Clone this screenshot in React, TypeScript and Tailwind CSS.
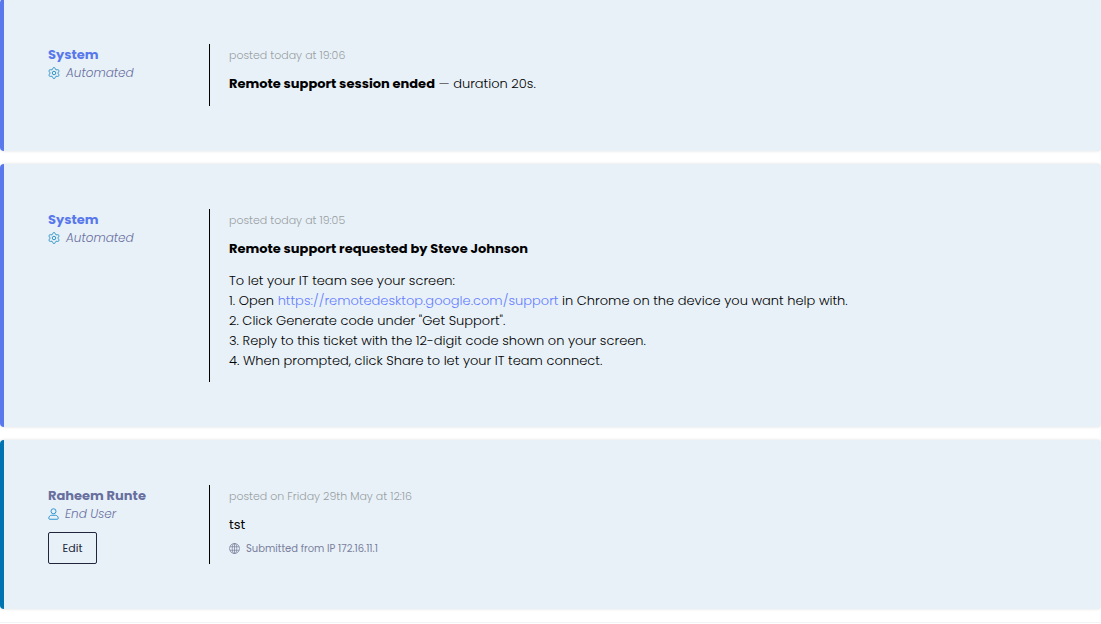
import type { ReactNode } from "react";

function GearIcon() {
  return (
    <svg className="size-3 shrink-0" viewBox="0 0 24 24" fill="none" stroke="#2f94c8" strokeWidth="2" strokeLinejoin="round" aria-hidden="true">
      <path d="M9.6 2.9a2.5 2.5 0 0 1 4.8 0l.4 1.2a2.5 2.5 0 0 0 3 1.6l1.2-.3a2.5 2.5 0 0 1 2.4 4.1l-.8 1a2.5 2.5 0 0 0 0 3.2l.8 1a2.5 2.5 0 0 1-2.4 4.1l-1.2-.3a2.5 2.5 0 0 0-3 1.6l-.4 1.2a2.5 2.5 0 0 1-4.8 0l-.4-1.2a2.5 2.5 0 0 0-3-1.6l-1.2.3a2.5 2.5 0 0 1-2.4-4.1l.8-1a2.5 2.5 0 0 0 0-3.2l-.8-1a2.5 2.5 0 0 1 2.4-4.1l1.2.3a2.5 2.5 0 0 0 3-1.6z" />
      <circle cx="12" cy="12" r="3.5" />
    </svg>
  );
}

function UserIcon() {
  return (
    <svg className="h-3 w-[11px] shrink-0" viewBox="0 0 22 24" fill="none" stroke="#2f94d0" strokeWidth="2" strokeLinejoin="round" aria-hidden="true">
      <circle cx="11" cy="6.5" r="5" />
      <path d="M7.5 14.5h7c3.5 0 6 2.8 6 6 0 1.2-.8 2-2 2h-15c-1.2 0-2-.8-2-2 0-3.2 2.5-6 6-6z" />
    </svg>
  );
}

function GlobeIcon() {
  return (
    <svg className="size-[11px] shrink-0" viewBox="0 0 22 22" fill="none" stroke="#7a809c" strokeWidth="1.5" aria-hidden="true">
      <circle cx="11" cy="11" r="10" />
      <ellipse cx="11" cy="11" rx="4.5" ry="10" />
      <path d="M2 7.5h18M2 14.5h18M11 1v20" />
    </svg>
  );
}

type PostProps = {
  author: string;
  role: string;
  posted: string;
  system?: boolean;
  editable?: boolean;
  children: ReactNode;
};

function Post({ author, role, posted, system = false, editable = false, children }: PostProps) {
  return (
    <article
      className={`flex rounded-[4px] border-l-4 bg-[#e8f1f8] py-[45px] pr-11 pl-11 shadow-[0_0_3px_rgba(0,0,0,0.14)] ${
        system ? "border-[#5978eb]" : "border-[#0073b1]"
      }`}
    >
      <div className="w-[161px] shrink-0 pt-px">
        <h2 className={`text-[13px] leading-[19px] font-bold ${system ? "text-[#5978eb]" : "text-[#686f9f]"}`}>{author}</h2>
        <p className="flex items-center gap-1.5 text-[12px] leading-[18px] font-light text-[#686f9f] italic">
          {system ? <GearIcon /> : <UserIcon />}
          {role}
        </p>
        {editable && (
          <button type="button" className="mt-[9px] h-8 w-[49px] rounded-[2px] border border-[#23263b] text-[11px] text-[#23263b]">
            Edit
          </button>
        )}
      </div>
      <div className="min-w-0 flex-1 border-l border-black pl-[19px] text-[13px] leading-5 font-light text-black">
        <p className="mb-[9px] pt-[2px] text-[11px] leading-[19px] text-[#999fa3]">{posted}</p>
        {children}
      </div>
    </article>
  );
}

export default function App() {
  return (
    <main className="-mt-px flex h-screen flex-col gap-[13px] overflow-hidden bg-white font-['Poppins','Inter',sans-serif] *:shrink-0">
      <Post author="System" role="Automated" posted="posted today at 19:06" system>
        <p className="pb-3">
          <strong className="font-bold">Remote support session ended</strong> — duration 20s.
        </p>
      </Post>

      <Post author="System" role="Automated" posted="posted today at 19:05" system>
        <p className="mb-3">
          <strong className="font-bold">Remote support requested by Steve Johnson</strong>
        </p>
        <p className="pb-[11px]">
          To let your IT team see your screen:
          <br />
          1. Open{" "}
          <a href="https://remotedesktop.google.com/support" className="text-[#667eff]">
            https://remotedesktop.google.com/support
          </a>{" "}
          in Chrome on the device you want help with.
          <br />
          2. Click Generate code under "Get Support".
          <br />
          3. Reply to this ticket with the 12-digit code shown on your screen.
          <br />
          4. When prompted, click Share to let your IT team connect.
        </p>
      </Post>

      <Post author="Raheem Runte" role="End User" posted="posted on Friday 29th May at 12:16" editable>
        <p className="font-normal">tst</p>
        <p className="mt-1 flex items-center gap-1.5 text-[10px] leading-[19px] font-normal text-[#7a809c]">
          <GlobeIcon />
          Submitted from IP 172.16.11.1
        </p>
      </Post>

      <hr className="border-[#f3f4f5]" />
    </main>
  );
}
